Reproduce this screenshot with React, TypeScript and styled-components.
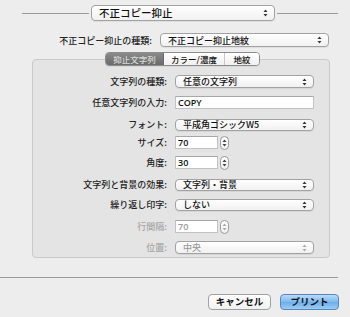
import styled, { createGlobalStyle, css } from "styled-components";

const Global = createGlobalStyle`
  html, body {
    margin: 0;
    padding: 0;
    background: #ededed;
  }
  body {
    font-family: "Noto Sans CJK JP", "Liberation Sans", sans-serif;
    color: #1a1a1a;
  }
`;

const Arrows = () => (
  <svg width="5" height="8" viewBox="0 0 5 8">
    <path d="M2.5 0.5 L4.5 3 L0.5 3 Z" fill="#333" />
    <path d="M2.5 7.5 L4.5 5 L0.5 5 Z" fill="#333" />
  </svg>
);

interface PopupProps {
  label: string;
  width: number;
  height?: number;
  big?: boolean;
  disabled?: boolean;
}

const Popup = ({ label, width, height = 14, big, disabled }: PopupProps) => (
  <PopupBox $w={width} $h={height} $big={big} $disabled={disabled}>
    <span>{label}</span>
    <Arrows />
  </PopupBox>
);

const Stepper = ({ disabled }: { disabled?: boolean }) => (
  <StepBox $disabled={disabled}>
    <Arrows />
  </StepBox>
);

interface RowProps {
  label: string;
  top: number;
  disabled?: boolean;
  children: React.ReactNode;
}

const Row = ({ label, top, disabled, children }: RowProps) => (
  <RowLine $top={top}>
    <Label $disabled={disabled}>{label}:</Label>
    <Controls>{children}</Controls>
  </RowLine>
);

export default function App() {
  return (
    <Page>
      <Global />
      <Header>
        <Rule $w={67} />
        <Popup label="不正コピー抑止" width={184} height={16} big />
        <Rule $w={61} />
      </Header>

      <KindRow>
        <KindLabel>不正コピー抑止の種類:</KindLabel>
        <Popup label="不正コピー抑止地紋" width={169} />
      </KindRow>

      <TabArea>
        <Tabs>
          <Tab $selected $w={57}>抑止文字列</Tab>
          <Tab $w={60}>カラー/濃度</Tab>
          <Tab $w={34} $last>地紋</Tab>
        </Tabs>
        <Panel>
          <Row label="文字列の種類" top={0}>
            <Popup label="任意の文字列" width={139} height={13} />
          </Row>
          <Row label="任意文字列の入力" top={8}>
            <Field $w={139}>COPY</Field>
          </Row>
          <Row label="フォント" top={9}>
            <Popup label="平成角ゴシックW5" width={139} height={12} />
          </Row>
          <Row label="サイズ" top={5}>
            <Field $w={43}>70</Field>
            <Stepper />
          </Row>
          <Row label="角度" top={7}>
            <Field $w={43}>30</Field>
            <Stepper />
          </Row>
          <Row label="文字列と背景の効果" top={9}>
            <Popup label="文字列・背景" width={139} height={12} />
          </Row>
          <Row label="繰り返し印字" top={7}>
            <Popup label="しない" width={139} height={12} />
          </Row>
          <Row label="行間隔" top={9} disabled>
            <Field $w={43} $disabled>70</Field>
            <Stepper disabled />
          </Row>
          <Row label="位置" top={8} disabled>
            <Popup label="中央" width={139} height={13} disabled />
          </Row>
        </Panel>
      </TabArea>

      <Separator />

      <Buttons>
        <Button>キャンセル</Button>
        <Button $primary>プリント</Button>
      </Buttons>
    </Page>
  );
}

const Page = styled.div`
  width: 350px;
  height: 317px;
  overflow: hidden;
  background: #ededed;
`;

const Header = styled.div`
  display: flex;
  align-items: center;
  gap: 2px;
  padding: 5px 0 0 22px;
  height: 16px;
`;

const Rule = styled.div<{ $w: number }>`
  width: ${(p) => p.$w}px;
  height: 1px;
  background: #9a9a9a;
`;

const PopupBox = styled.div<{ $w: number; $h: number; $big?: boolean; $disabled?: boolean }>`
  box-sizing: border-box;
  width: ${(p) => p.$w}px;
  height: ${(p) => p.$h}px;
  display: flex;
  align-items: center;
  justify-content: space-between;
  padding: 0 6px 0 7px;
  border: 1px solid #a2a2a2;
  border-radius: 4px;
  background: linear-gradient(#ffffff, #f1f1f1);
  box-shadow: 0 1px 0 rgba(0, 0, 0, 0.06);
  font-size: ${(p) => (p.$big ? 10.5 : 9)}px;
  font-weight: 500;
  line-height: 1;
  color: ${(p) => (p.$disabled ? "#9a9a9a" : "#111")};
  flex-shrink: 0;
  svg path {
    fill: ${(p) => (p.$disabled ? "#aaa" : "#333")};
  }
`;

const KindRow = styled.div`
  display: flex;
  align-items: center;
  justify-content: flex-end;
  gap: 8px;
  margin-top: 12px;
  padding-right: 21px;
  height: 14px;
`;

const KindLabel = styled.div`
  font-size: 9px;
  font-weight: 500;
  color: #222;
`;

const TabArea = styled.div`
  display: flex;
  flex-direction: column;
  margin: 5px 20px 0 32px;
`;

const Tabs = styled.div`
  display: flex;
  align-self: flex-start;
  margin: 0 0 -7px 73px;
  position: relative;
  z-index: 1;
  border: 1px solid #8c8c8c;
  border-radius: 4px;
  overflow: hidden;
  height: 12px;
  box-shadow: 0 1px 0 rgba(0, 0, 0, 0.05);
`;

const Tab = styled.div<{ $selected?: boolean; $w: number; $last?: boolean }>`
  width: ${(p) => p.$w}px;
  display: flex;
  align-items: center;
  justify-content: center;
  font-size: 8.5px;
  font-weight: 500;
  line-height: 1;
  ${(p) =>
    p.$selected
      ? css`
          background: linear-gradient(#8a8a8a, #6a6a6a);
          color: #d8d8d8;
        `
      : css`
          background: linear-gradient(#ffffff, #f0f0f0);
          color: #111;
        `}
  border-right: ${(p) => (p.$last ? "none" : p.$selected ? "1px solid #6a6a6a" : "1px solid #c8c8c8")};
`;

const Panel = styled.div`
  box-sizing: border-box;
  height: 199px;
  padding-top: 15px;
  background: #e4e4e4;
  border: 1px solid #c9c9c9;
  border-radius: 4px;
`;

const RowLine = styled.div<{ $top: number }>`
  display: flex;
  align-items: center;
  margin-top: ${(p) => p.$top}px;
  height: 13px;
`;

const Label = styled.div<{ $disabled?: boolean }>`
  width: 134px;
  text-align: right;
  font-size: 9px;
  font-weight: 500;
  line-height: 1;
  color: ${(p) => (p.$disabled ? "#a6a6a6" : "#222")};
`;

const Controls = styled.div`
  display: flex;
  align-items: center;
  gap: 2px;
  margin-left: 8px;
`;

const Field = styled.div<{ $w: number; $disabled?: boolean }>`
  box-sizing: border-box;
  width: ${(p) => p.$w}px;
  height: 13px;
  display: flex;
  align-items: center;
  padding-left: 2px;
  background: #fff;
  border: 1px solid #c2c2c2;
  border-top-color: #a8a8a8;
  font-family: "Open Sans", "Liberation Sans", sans-serif;
  font-size: 9px;
  font-weight: 600;
  color: ${(p) => (p.$disabled ? "#9a9a9a" : "#111")};
`;

const StepBox = styled.div<{ $disabled?: boolean }>`
  box-sizing: border-box;
  width: 9px;
  height: 14px;
  display: flex;
  align-items: center;
  justify-content: center;
  border: 1px solid #9c9c9c;
  border-radius: 5px;
  background: linear-gradient(#ffffff, #f0f0f0);
  svg path {
    fill: ${(p) => (p.$disabled ? "#aaa" : "#444")};
  }
`;

const Separator = styled.div`
  margin: 19px 12px 0 0;
  height: 1px;
  background: #9a9a9a;
`;

const Buttons = styled.div`
  display: flex;
  justify-content: flex-end;
  gap: 9px;
  margin-top: 16px;
  padding-right: 11px;
`;

const Button = styled.div<{ $primary?: boolean }>`
  box-sizing: border-box;
  height: 16px;
  width: ${(p) => (p.$primary ? 59 : 63)}px;
  display: flex;
  align-items: center;
  justify-content: center;
  border-radius: 4px;
  font-size: 9.5px;
  font-weight: bold;
  line-height: 1;
  color: #111;
  ${(p) =>
    p.$primary
      ? css`
          border: 1px solid #5a86bf;
          background: linear-gradient(#b9dbf8, #7db8ee 50%, #6aaeeb 51%, #9ccdf5);
        `
      : css`
          border: 1px solid #a0a0a0;
          background: linear-gradient(#ffffff, #f0f0f0);
        `}
`;
